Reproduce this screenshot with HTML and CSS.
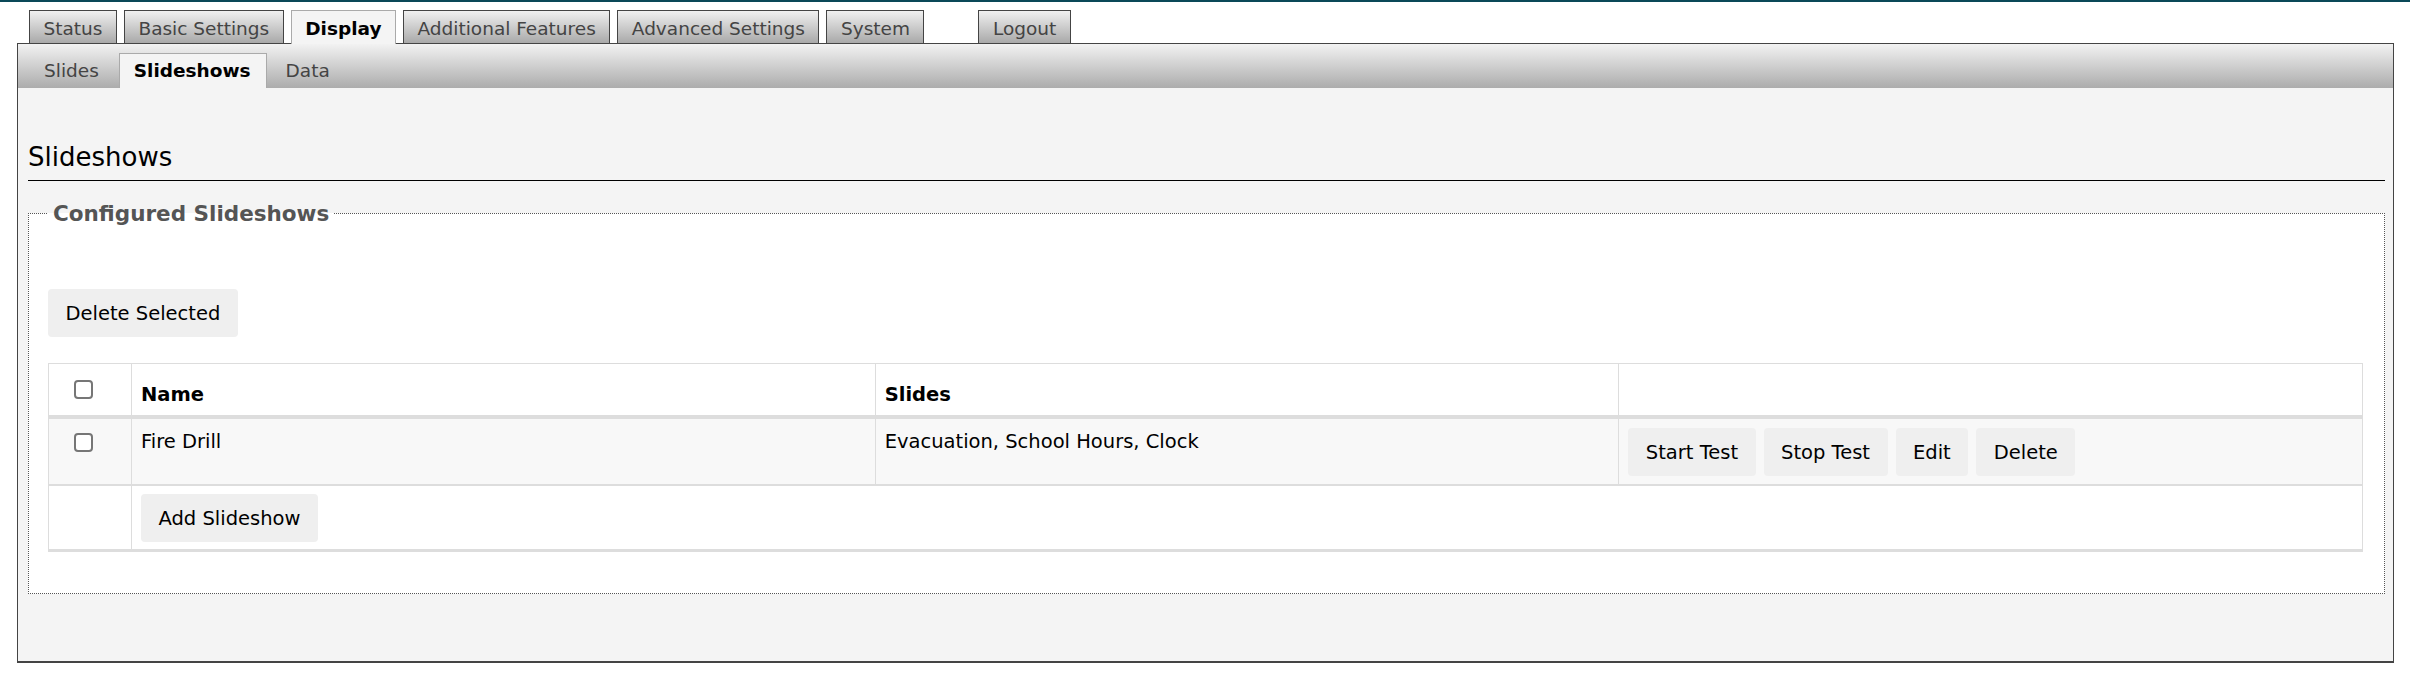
FILE: index.html
```html
<!DOCTYPE html>
<html lang="en">

<head>
    <meta charset="UTF-8">
    <meta name="viewport" content="width=device-width, initial-scale=1.0">
    <title>Display - Slideshows</title>
    <link rel="stylesheet" href="styles.css">
</head>

<body>
    <div class="topbar"></div>

    <div class="page">
        <ul class="tabs">
            <li>Status</li>
            <li>Basic Settings</li>
            <li class="active">Display</li>
            <li>Additional Features</li>
            <li>Advanced Settings</li>
            <li>System</li>
            <li class="logout">Logout</li>
        </ul>

        <div class="panel">
            <ul class="subtabs">
                <li>Slides</li>
                <li class="active">Slideshows</li>
                <li>Data</li>
            </ul>

            <div class="content">
                <h2>Slideshows</h2>

                <fieldset>
                    <legend>Configured Slideshows</legend>

                    <div class="toolbar">
                        <button class="btn">Delete Selected</button>
                    </div>

                    <table class="grid">
                        <colgroup>
                            <col class="col-check">
                            <col>
                            <col>
                            <col>
                        </colgroup>
                        <thead>
                            <tr>
                                <th class="check"><input type="checkbox"></th>
                                <th>Name</th>
                                <th>Slides</th>
                                <th></th>
                            </tr>
                        </thead>
                        <tbody>
                            <tr class="stripe">
                                <td class="check"><input type="checkbox"></td>
                                <td>Fire Drill</td>
                                <td>Evacuation, School Hours, Clock</td>
                                <td class="actions">
                                    <div class="btn-row">
                                        <button class="btn">Start Test</button>
                                        <button class="btn">Stop Test</button>
                                        <button class="btn">Edit</button>
                                        <button class="btn">Delete</button>
                                    </div>
                                </td>
                            </tr>
                            <tr class="adder">
                                <td></td>
                                <td colspan="3"><button class="btn">Add Slideshow</button></td>
                            </tr>
                        </tbody>
                    </table>
                </fieldset>
            </div>
        </div>
    </div>
</body>

</html>
```

FILE: styles.css
```css
body {
    margin: 0;
    font-family: "DejaVu Sans", Verdana, sans-serif;
    font-size: 19.5px;
    color: #000;
    background: #fff;
}

.topbar {
    height: 2px;
    background: #0a4858;
}

.page {
    margin: 0 16px 0 17px;
}

/* main navigation tabs */
.tabs {
    list-style: none;
    display: flex;
    margin: 8px 0 0;
    padding: 0 0 0 12px;
}

.tabs li {
    margin-right: 7px;
    padding: 3px 13.5px 0;
    line-height: 29px;
    font-size: 18.5px;
    color: #444;
    border: 1px solid #444;
    border-bottom: none;
    background: linear-gradient(#f0f0f0, #a9a9a9);
}

.tabs li.active {
    position: relative;
    z-index: 1;
    margin-bottom: -1px;
    font-weight: bold;
    color: #000;
    border-color: #aaa;
    background: #f4f4f4;
}

.tabs li.logout {
    margin-left: 47px;
}

.panel {
    border: 1px solid #444;
    border-bottom-width: 2px;
    background: #f4f4f4;
}

/* second level tabs */
.subtabs {
    list-style: none;
    display: flex;
    margin: 0;
    padding: 9px 0 0 11px;
    background: linear-gradient(#f2f2f2, #acacac);
}

.subtabs li {
    margin-right: 4px;
    padding: 0 15px 0 14px;
    line-height: 34px;
    font-size: 18.5px;
    color: #444;
    border: 1px solid transparent;
    border-bottom: none;
}

.subtabs li.active {
    font-weight: bold;
    color: #000;
    border-color: #aaa;
    background: #f4f4f4;
}

.content {
    padding: 0 8px 67px 10px;
}

h2 {
    margin: 54px 0 0;
    padding-bottom: 8px;
    font-size: 26px;
    font-weight: normal;
    border-bottom: 1px solid #000;
}

fieldset {
    margin: 20px 0 0;
    padding: 0 21px 41px 19px;
    border: 1px dotted #555;
    background: #fff;
}

legend {
    padding: 0 4px 0 5px;
    font-size: 21.5px;
    font-weight: bold;
    line-height: 25px;
    color: #555;
}

.toolbar {
    padding-top: 63px;
}

.btn {
    height: 48px;
    padding: 0 17.5px;
    border: none;
    border-radius: 4px;
    background: #efefef;
    font-family: inherit;
    font-size: 19.5px;
    color: #000;
}

/* slideshow list */
.grid {
    width: 100%;
    margin-top: 26px;
    border-collapse: collapse;
    table-layout: fixed;
    border: 1px solid #ddd;
    line-height: 1.2;
}

.grid .col-check {
    width: 83px;
}

.grid th,
.grid td {
    text-align: left;
    border-left: 1px solid #ddd;
    border-right: 1px solid #ddd;
}

.grid th {
    padding: 16px 9px 9px;
    vertical-align: bottom;
    border-bottom: 4px solid #ddd;
}

.grid td {
    padding: 11px 9px;
    vertical-align: top;
    border-bottom: 2px solid #ddd;
}

.grid .check {
    padding-left: 25px;
}

.grid input[type="checkbox"] {
    appearance: none;
    width: 19px;
    height: 19px;
    margin: 0;
    border: 2px solid #767676;
    border-radius: 4px;
    background: #fff;
    vertical-align: middle;
}

.grid th input[type="checkbox"] {
    vertical-align: baseline;
    margin-bottom: 2px;
}

.grid tr.stripe td {
    background: #f8f8f8;
}

.grid td.actions {
    padding: 9px 9px 8px;
}

.btn-row {
    display: flex;
    gap: 8px;
}

.grid tr.adder td {
    padding: 8px 9px 7px;
    border-bottom-width: 3px;
}
```
